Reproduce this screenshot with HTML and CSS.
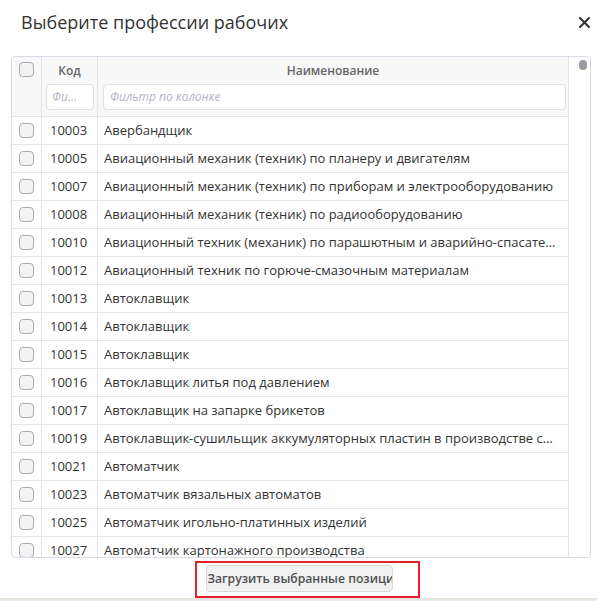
FILE: index.html
```html
<!DOCTYPE html>
<html lang="ru">
<head>
<meta charset="utf-8">
<link rel="stylesheet" href="styles.css">
</head>
<body>
<div class="modal">
  <div class="modal-head">
    <h1 class="title">Выберите профессии рабочих</h1>
    <svg class="close" width="11" height="11" viewBox="0 0 11 11"><path d="M1 1L10 10M10 1L1 10" stroke="#333" stroke-width="2" stroke-linecap="round"/></svg>
  </div>
  <div class="grid">
    <div class="table">
      <div class="thead">
        <div class="hcell c1"><span class="cb"></span></div>
        <div class="hcell c2">
          <div class="hlabel">Код</div>
          <div class="filter">Фи...</div>
        </div>
        <div class="hcell c3">
          <div class="hlabel">Наименование</div>
          <div class="filter">Фильтр по колонке</div>
        </div>
      </div>
      <div class="tbody">
        <div class="row"><div class="cell c1"><span class="cb"></span></div><div class="cell c2">10003</div><div class="cell c3">Авербандщик</div></div>
        <div class="row"><div class="cell c1"><span class="cb"></span></div><div class="cell c2">10005</div><div class="cell c3">Авиационный механик (техник) по планеру и двигателям</div></div>
        <div class="row"><div class="cell c1"><span class="cb"></span></div><div class="cell c2">10007</div><div class="cell c3">Авиационный механик (техник) по приборам и электрооборудованию</div></div>
        <div class="row"><div class="cell c1"><span class="cb"></span></div><div class="cell c2">10008</div><div class="cell c3">Авиационный механик (техник) по радиооборудованию</div></div>
        <div class="row"><div class="cell c1"><span class="cb"></span></div><div class="cell c2">10010</div><div class="cell c3">Авиационный техник (механик) по парашютным и аварийно-спасательным средствам</div></div>
        <div class="row"><div class="cell c1"><span class="cb"></span></div><div class="cell c2">10012</div><div class="cell c3">Авиационный техник по горюче-смазочным материалам</div></div>
        <div class="row"><div class="cell c1"><span class="cb"></span></div><div class="cell c2">10013</div><div class="cell c3">Автоклавщик</div></div>
        <div class="row"><div class="cell c1"><span class="cb"></span></div><div class="cell c2">10014</div><div class="cell c3">Автоклавщик</div></div>
        <div class="row"><div class="cell c1"><span class="cb"></span></div><div class="cell c2">10015</div><div class="cell c3">Автоклавщик</div></div>
        <div class="row"><div class="cell c1"><span class="cb"></span></div><div class="cell c2">10016</div><div class="cell c3">Автоклавщик литья под давлением</div></div>
        <div class="row"><div class="cell c1"><span class="cb"></span></div><div class="cell c2">10017</div><div class="cell c3">Автоклавщик на запарке брикетов</div></div>
        <div class="row"><div class="cell c1"><span class="cb"></span></div><div class="cell c2">10019</div><div class="cell c3">Автоклавщик-сушильщик аккумуляторных пластин в производстве свинцовых аккумуляторов</div></div>
        <div class="row"><div class="cell c1"><span class="cb"></span></div><div class="cell c2">10021</div><div class="cell c3">Автоматчик</div></div>
        <div class="row"><div class="cell c1"><span class="cb"></span></div><div class="cell c2">10023</div><div class="cell c3">Автоматчик вязальных автоматов</div></div>
        <div class="row"><div class="cell c1"><span class="cb"></span></div><div class="cell c2">10025</div><div class="cell c3">Автоматчик игольно-платинных изделий</div></div>
        <div class="row"><div class="cell c1"><span class="cb"></span></div><div class="cell c2">10027</div><div class="cell c3">Автоматчик картонажного производства</div></div>
        <div class="row"><div class="cell c1"><span class="cb"></span></div><div class="cell c2">10029</div><div class="cell c3">Автоматчик клеевого производства</div></div>
      </div>
    </div>
    <div class="gutter"><span class="thumb"></span></div>
  </div>
  <div class="modal-foot">
    <button class="btn">Загрузить выбранные позиции</button>
    <span class="highlight"></span>
  </div>
</div>
<div class="strip"></div>
</body>
</html>
```

FILE: styles.css
```css
* { box-sizing: border-box; }
html, body { margin: 0; padding: 0; background: #fff; }
body {
  font-family: "Open Sans", "Noto Sans", sans-serif;
  color: #333;
  width: 597px;
  height: 601px;
  overflow: hidden;
}
.modal {
  width: 597px;
  height: 598px;
  display: flex;
  flex-direction: column;
  background: #fff;
}
.modal-head {
  height: 56px;
  display: flex;
  align-items: flex-start;
  justify-content: space-between;
  padding: 10px 7px 0 21px;
}
.title {
  margin: 0;
  font-size: 18px;
  line-height: 24px;
  font-weight: 500;
  color: #333;
}
.close { margin-top: 7px; }

.grid {
  margin-left: 11px;
  width: 580px;
  height: 502px;
  border: 1px solid #dadae6;
  border-radius: 4px;
  display: flex;
  overflow: hidden;
}
.table {
  width: 557px;
  border-right: 1px solid #e3e3e8;
  overflow: hidden;
  display: flex;
  flex-direction: column;
}
.gutter {
  flex: 1;
  position: relative;
  background: #fff;
}
.thumb {
  position: absolute;
  left: 10px;
  top: 3px;
  width: 8px;
  height: 10px;
  border-radius: 4px;
  background: #999aa3;
}
.thead {
  display: flex;
  background: #f8f8f9;
  border-bottom: 1px solid #e3e3e8;
  flex: none;
}
.c1 { width: 30px; flex: none; border-right: 1px solid #e3e3e8; }
.c2 { width: 56px; flex: none; border-right: 1px solid #e3e3e8; }
.c3 { flex: 1; min-width: 0; }
.hcell { padding-bottom: 6px; }
.hcell.c1 { display: flex; justify-content: center; padding-top: 5px; }
.hlabel {
  height: 27px;
  line-height: 27px;
  text-align: center;
  font-size: 12px;
  font-weight: 600;
  color: #666;
}
.filter {
  height: 26px;
  line-height: 24px;
  border: 1px solid #dedee8;
  border-radius: 4px;
  background: #fff;
  font-size: 12px;
  font-style: italic;
  color: #b4b4c4;
  padding: 0 6px;
  white-space: nowrap;
  overflow: hidden;
}
.c2 .filter { margin: 0 3px 0 4px; padding: 0 5px; }
.c3 .filter { margin: 0 2px 0 5px; }

.cb {
  display: block;
  width: 15px;
  height: 15px;
  border: 1px solid #ababb0;
  border-radius: 4px;
  background: #f2f2f3;
}
.tbody { flex: 1; overflow: hidden; }
.row {
  display: flex;
  height: 28px;
  border-bottom: 1px solid #e6e6ea;
}
.cell {
  font-size: 13px;
  line-height: 27px;
  color: #333;
  white-space: nowrap;
  overflow: hidden;
  text-overflow: ellipsis;
}
.cell.c1 { display: flex; align-items: center; justify-content: center; }
.cell.c2 { padding-left: 8px; }
.cell.c3 { padding: 0 9px 0 6px; }

.modal-foot {
  flex: 1;
  position: relative;
  display: flex;
  justify-content: center;
  padding-top: 7px;
}
.btn {
  width: 187px;
  height: 27px;
  padding: 0 0 0 1px;
  border: 1px solid #d8d8dc;
  border-radius: 4px;
  background: #f1f1f2;
  font-family: "Open Sans", "Noto Sans", sans-serif;
  font-size: 12.2px;
  font-weight: 600;
  color: #505050;
  text-align: left;
  white-space: nowrap;
  overflow: hidden;
  margin-left: 1px;
}
.highlight {
  position: absolute;
  left: 195px;
  top: 3px;
  width: 225px;
  height: 37px;
  border: 2px solid #e3222b;
  pointer-events: none;
}
.strip {
  height: 3px;
  background: linear-gradient(#e3e1dc, #efede6);
}
```
